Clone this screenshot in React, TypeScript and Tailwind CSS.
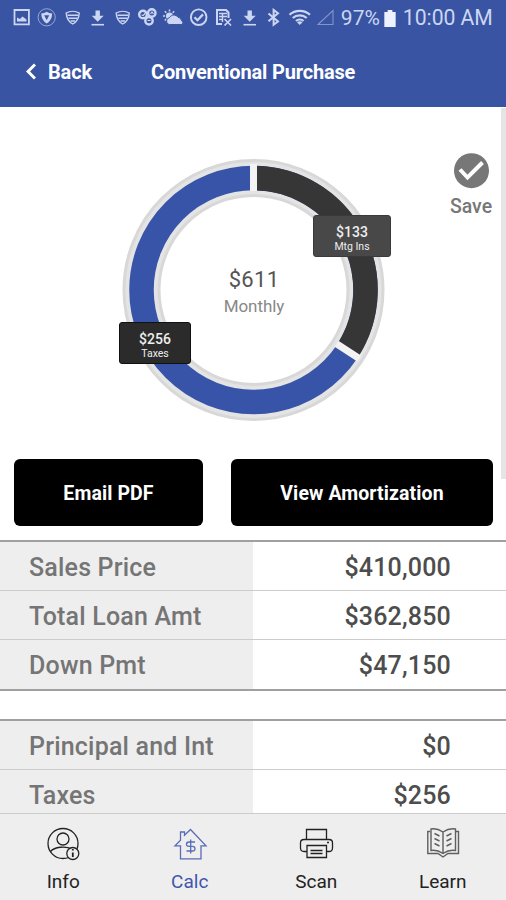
import type { ReactNode } from 'react';

const loanRows = [
  { label: 'Sales Price', value: '$410,000' },
  { label: 'Total Loan Amt', value: '$362,850' },
  { label: 'Down Pmt', value: '$47,150' },
];

const paymentRows = [
  { label: 'Principal and Int', value: '$0' },
  { label: 'Taxes', value: '$256' },
];

function StatusIcon({ children }: { children: ReactNode }) {
  return (
    <svg className="h-5 w-[25.3px] shrink-0" viewBox="0 0 25.3 20" fill="none" stroke="currentColor" strokeWidth="1.6">
      {children}
    </svg>
  );
}

function WifiBadge() {
  return (
    <StatusIcon>
      <path d="M6.2 5C10 2.800 15.500 2.800 19.200 5C19 10.500 16.500 14 12.700 16C9 14 6.500 10.500 6.200 5Z" strokeWidth="1.400" />
      <path d="M7.500 7.200H18M8.500 10.300H17M10.500 13H15" strokeWidth="1.500" />
    </StatusIcon>
  );
}

function DownloadGlyph() {
  return (
    <StatusIcon>
      <path d="M10.500 2.500h4.400v5.200h3.800L12.700 13.800 6.700 7.700h3.800z" fill="currentColor" stroke="none" />
      <path d="M6.500 16.700h12.500" />
    </StatusIcon>
  );
}

function StatusBar() {
  return (
    <div className="flex h-9 items-center pl-[9px] text-[#ccd6f2]">
      <StatusIcon>
        <path d="M5.500 2h14.400v14.400h-14.400z" strokeWidth="1.800" />
        <path d="M8 13.500V9.500l3 1.500 2.500-2.500 4 3v2z" fill="currentColor" stroke="none" />
      </StatusIcon>
      <StatusIcon>
        <circle cx="12.700" cy="9.300" r="8.600" strokeWidth="0.900" opacity="0.700" />
        <path d="M7.200 5.500Q10.500 5.500 12.700 3.800Q15 5.500 18.200 5.500Q18 12.500 12.700 15.500Q7.500 12.500 7.200 5.500Z" fill="currentColor" stroke="none" />
        <path d="M10.200 7.200h5l-2.500 5z" fill="#3854a3" stroke="none" />
      </StatusIcon>
      <WifiBadge />
      <DownloadGlyph />
      <WifiBadge />
      <StatusIcon>
        <circle cx="8" cy="6.500" r="3.800" strokeWidth="2.400" />
        <circle cx="16.800" cy="5" r="3.700" strokeWidth="2.400" />
        <circle cx="14" cy="12.800" r="3.700" strokeWidth="2.400" />
        <path d="M6.500 7l1.700.5 2-2.500M15.500 6l1.500-2 1.500 2M12.500 12.500h3" strokeWidth="1.200" />
      </StatusIcon>
      <StatusIcon>
        <circle cx="8.500" cy="8" r="3.600" fill="currentColor" stroke="none" />
        <path d="M8.500 1.500v2M3.800 3.300l1.500 1.500M2 8h2M3.800 12.500l1.500-1.500M13.200 3.300l-1.500 1.500" strokeWidth="1.500" />
        <path d="M8 16.500a3.500 3.500 0 0 1 .5-6.800 5 5 0 0 1 8.500-.5 4 4 0 0 1 3.500 3.500 2 2 0 0 1 0 3.800z" fill="currentColor" stroke="#3854a3" strokeWidth="1" />
      </StatusIcon>
      <StatusIcon>
        <circle cx="12.700" cy="9.200" r="7.800" strokeWidth="1.900" />
        <path d="M8.500 9.200l3 3 5.500-5.800" strokeWidth="2.300" />
      </StatusIcon>
      <StatusIcon>
        <path d="M11 16H6V2H15L17.500 4.500V10" strokeWidth="2" />
        <path d="M8 5.500h8M8 8.500h8M8 11.500h4M11.500 6v8" strokeWidth="1.400" />
        <path d="M13.500 11l6.500 6.500M20 11L13.500 17.500" strokeWidth="1.700" />
      </StatusIcon>
      <DownloadGlyph />
      <StatusIcon>
        <path d="M6.500 5.500l9.500 8-4.400 3.300V1.900l4.400 3.300-9.500 8" strokeWidth="2" />
      </StatusIcon>
      <StatusIcon>
        <path d="M2.500 6.800C8 1.500 17.500 1.500 23 6.800M5.800 10C9.500 6.500 16 6.500 19.700 10M9 13C11 11 14.500 11 16.500 13" strokeWidth="2.200" />
        <path d="M10 14.200Q12.700 12.500 15.500 14.200L12.700 17z" fill="currentColor" stroke="none" />
      </StatusIcon>
      <StatusIcon>
        <path d="M5 16.500L20 2.500V16.500Z" strokeWidth="1.100" opacity="0.500" />
      </StatusIcon>
      <span className="ml-[3px] w-[43px] text-[21px] leading-none whitespace-nowrap">97%</span>
      <svg className="h-[17px] w-3 shrink-0" viewBox="0 0 12 18" fill="#eef2ff">
        <path d="M3.500 0h5v2H12v16H0V2h3.500z" />
      </svg>
      <span className="ml-[7px] text-[21.200px] leading-none tracking-[-0.050px] whitespace-nowrap">10:00 AM</span>
    </div>
  );
}

function Header() {
  return (
    <header className="h-[107px] shrink-0 bg-[#3854a3] text-white">
      <StatusBar />
      <div className="flex h-[71px] items-center pl-[26px] text-[20px] font-bold">
        <svg className="mr-3 h-[18px] w-[10px]" viewBox="0 0 10 18" fill="none" stroke="currentColor" strokeWidth="3">
          <path d="M9 1.500L2 8.500l7 7" />
        </svg>
        <span className="w-[103px] tracking-[-0.150px]">Back</span>
        <h1 className="tracking-[-0.170px] whitespace-nowrap">Conventional Purchase</h1>
      </div>
    </header>
  );
}

function PaymentChart() {
  return (
    <div className="relative mt-[51px] ml-[122px] flex h-[264px] w-[264px] flex-col items-center justify-center pt-[5px]">
      <svg className="absolute inset-0" width="264" height="264" viewBox="0 0 264 264" fill="none">
        <circle cx="131.500" cy="132" r="112" stroke="#d8d8d8" strokeWidth="38" />
        <circle cx="131.500" cy="132" r="112" stroke="#e4e4e4" strokeWidth="32" />
        <circle cx="131.500" cy="132" r="112" stroke="#3854a8" strokeWidth="24.500" />
        <path d="M131.500 20A112 112 0 0 1 225.500 192.900" stroke="#363636" strokeWidth="24.500" />
        <path d="M131.500 33V6M214.500 185.700L237.200 200.500" stroke="#f3f3f3" strokeWidth="7" />
      </svg>
      <div className="relative text-[22px] leading-[26px] tracking-[0.300px] text-[#555]">$611</div>
      <div className="relative text-[17px] leading-[26px] tracking-[-0.050px] text-[#888]">Monthly</div>
      <div className="absolute top-[57px] left-[191px] flex h-[42px] w-[78px] flex-col items-center rounded-[3px] border border-[#3a3a3a] bg-[#484848] pt-[7px] text-[#eee]">
        <span className="text-[14px] leading-[18px] font-medium">$133</span>
        <span className="text-[10.500px] leading-[12px]">Mtg Ins</span>
      </div>
      <div className="absolute top-[164px] left-[-3px] flex h-[42px] w-[72px] flex-col items-center rounded-[3px] border border-[#111] bg-[#2b2b2b] pt-[7px] text-[#eee]">
        <span className="text-[14px] leading-[18px] font-medium">$256</span>
        <span className="text-[10.500px] leading-[12px]">Taxes</span>
      </div>
    </div>
  );
}

function Table({ rows }: { rows: { label: string; value: string }[] }) {
  return (
    <div className="border-y-2 border-[#a0a0a0] text-[25px] font-medium tracking-[0.190px]">
      {rows.map((row) => (
        <div key={row.label} className="flex h-[49px] border-b border-[#ccc] last:border-b-0">
          <div className="flex w-[253px] items-center bg-[#eee] pt-[3px] pl-[29px] whitespace-nowrap text-[#757575]">{row.label}</div>
          <div className="flex flex-1 items-center justify-end pt-[3px] pr-[55px] text-[#4d4d4d]">{row.value}</div>
        </div>
      ))}
    </div>
  );
}

function NavItem({ label, active, children }: { label: string; active?: boolean; children: ReactNode }) {
  return (
    <button className={`flex flex-1 flex-col items-center pt-[13px] ${active ? 'text-[#3e56ad]' : 'text-[#222]'}`}>
      <svg className="h-[34px] w-9" viewBox="0 0 36 34" fill="none" stroke="currentColor" strokeWidth="1.300">
        {children}
      </svg>
      <span className="mt-[9px] text-[19px] leading-6">{label}</span>
    </button>
  );
}

function BottomNav() {
  return (
    <nav className="flex h-[87px] shrink-0 border-t border-[#ccc] bg-[#eee]">
      <NavItem label="Info">
        <circle cx="18" cy="16.500" r="15" />
        <circle cx="18" cy="12" r="6" />
        <path d="M5.500 24.500C9.500 20 20 18.500 27 22" />
        <circle cx="27.800" cy="26.500" r="6" fill="#eee" />
        <path d="M27.800 25.500v4.500M27.800 22v1.500" strokeWidth="1.800" />
      </NavItem>
      <NavItem label="Calc" active>
        <g strokeOpacity="0.850">
          <path d="M8.500 31.800V18.800H3L8.500 13.200V5H12.500V8.300L18.500 2.500L34 18.800H29V31.800Z" />
          <path d="M23 15H17Q14.500 15 14.500 17.200T17 19.400H20.500Q23 19.400 23 21.700T20.500 24H14.500M18.700 12.500V26.500" />
        </g>
      </NavItem>
      <NavItem label="Scan">
        <path d="M8.500 12V2.500H28.500V12M9 24.500H6Q2.500 24.500 2.500 21V16Q2.500 12.500 6 12.500H31Q34.500 12.500 34.500 16V21Q34.500 24.500 31 24.500H28.500" />
        <path d="M9 18.500H28.500V30.500H9ZM12.500 23.500H24.500M12.500 26.500H24.500M29 15.500h2" />
      </NavItem>
      <NavItem label="Learn">
        <g strokeOpacity="0.700" strokeWidth="1.400">
          <path d="M18 5Q12 1 6 2V23.500Q12 22.500 18 26.500Q24 22.500 30.500 23.500V2Q24 1 18 5V26.500" />
          <path d="M5 4.500H2.800V26.500H13L18 30L23 26.500H33.500V4.500H31" />
          <path d="M9.500 6.500L14.500 9M9.500 11.500L14.500 14M9.500 16.500L14.500 19M26.500 6.500L21.500 9M26.500 11.500L21.500 14M26.500 16.500L21.500 19" />
        </g>
      </NavItem>
    </nav>
  );
}

export default function App() {
  return (
    <div className="flex h-[900px] w-[506px] flex-col overflow-hidden bg-white font-['Roboto',sans-serif]">
      <Header />
      <main className="relative min-h-0 flex-1 overflow-hidden">
        <div className="absolute top-px right-0 h-[371px] w-[5px] bg-[#e5e5e5]" />
        <button className="absolute top-[46px] right-[13px] flex w-[44px] flex-col items-center text-[#777]">
          <svg className="h-[36px] w-[36px]" viewBox="0 0 36 36">
            <circle cx="18.500" cy="17.700" r="17.500" fill="currentColor" />
            <path d="M7 16.500L14.500 24.500L29.500 9.500" fill="none" stroke="white" strokeWidth="4" />
          </svg>
          <span className="mt-[6px] text-[19.500px] leading-6 font-medium">Save</span>
        </button>
        <PaymentChart />
        <div className="mt-[37px] flex gap-7 pr-[13px] pl-[14px] text-[19.500px] font-bold tracking-[0.100px] text-white">
          <button className="h-[67px] w-[189px] rounded-md bg-black pt-[3px]">Email PDF</button>
          <button className="h-[67px] flex-1 rounded-md bg-black pt-[3px]">View Amortization</button>
        </div>
        <div className="mt-[14px] flex flex-col gap-[28px]">
          <Table rows={loanRows} />
          <Table rows={paymentRows} />
        </div>
      </main>
      <BottomNav />
    </div>
  );
}
